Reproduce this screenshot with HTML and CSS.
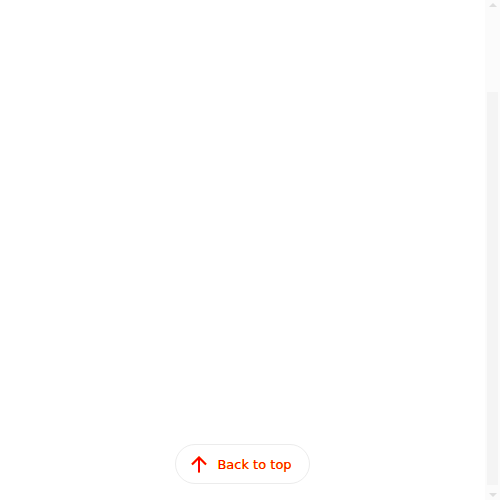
FILE: index.html
```html
<!DOCTYPE html>
<html>
<head>
<meta charset="utf-8">
<link rel="stylesheet" href="styles.css">
</head>
<body>
<div class="layout">
  <main class="main">
    <a class="back-to-top" href="#">
      <svg class="arrow" width="16" height="17" viewBox="0 0 16 17" aria-hidden="true">
        <path d="M8 16.5V2M1 8.5L8 1.5l7 7" fill="none" stroke="red" stroke-width="2"/>
      </svg>
      <span class="label">Back to top</span>
    </a>
  </main>
  <div class="scrollbar" aria-hidden="true">
    <div class="sb-btn sb-up"></div>
    <div class="sb-track"><div class="sb-thumb"></div></div>
    <div class="sb-btn sb-down"></div>
  </div>
</div>
</body>
</html>
```
FILE: styles.css
```css
html, body {
  margin: 0;
  padding: 0;
  background: #fff;
}
.layout {
  display: grid;
  grid-template-columns: 1fr 15px;
  height: 100vh;
}
.main {
  display: flex;
  justify-content: center;
  align-items: flex-end;
  padding-bottom: 16px;
}
.back-to-top {
  display: flex;
  align-items: center;
  gap: 10px;
  padding: 0 17px 0 15px;
  height: 38px;
  border: 1px solid #ececec;
  border-radius: 20px;
  background: #fff;
  text-decoration: none;
  color: red;
  font-family: "DejaVu Sans", sans-serif;
  font-size: 13px;
  white-space: nowrap;
  text-shadow: 0 0 0.6px #ff0, 0 0 0.6px #ff0;
}
.arrow {
  display: block;
  filter: drop-shadow(0 0 0.5px #ff0);
}
.label {
  line-height: 1;
}
.scrollbar {
  display: flex;
  flex-direction: column;
  background: #fbfbfb;
}
.sb-btn {
  height: 15px;
  display: flex;
  justify-content: center;
  align-items: center;
}
.sb-up::before,
.sb-down::before {
  content: "";
  width: 0;
  height: 0;
  border-left: 4px solid transparent;
  border-right: 4px solid transparent;
}
.sb-up::before {
  border-bottom: 4px solid #dedede;
  margin-bottom: 5px;
}
.sb-down::before {
  border-top: 4px solid #dedede;
  margin-top: 4px;
}
.sb-track {
  flex: 1;
  display: flex;
  flex-direction: column;
  justify-content: flex-end;
  padding: 0 2px;
}
.sb-thumb {
  height: 393px;
  background: #f4f4f4;
}
```
